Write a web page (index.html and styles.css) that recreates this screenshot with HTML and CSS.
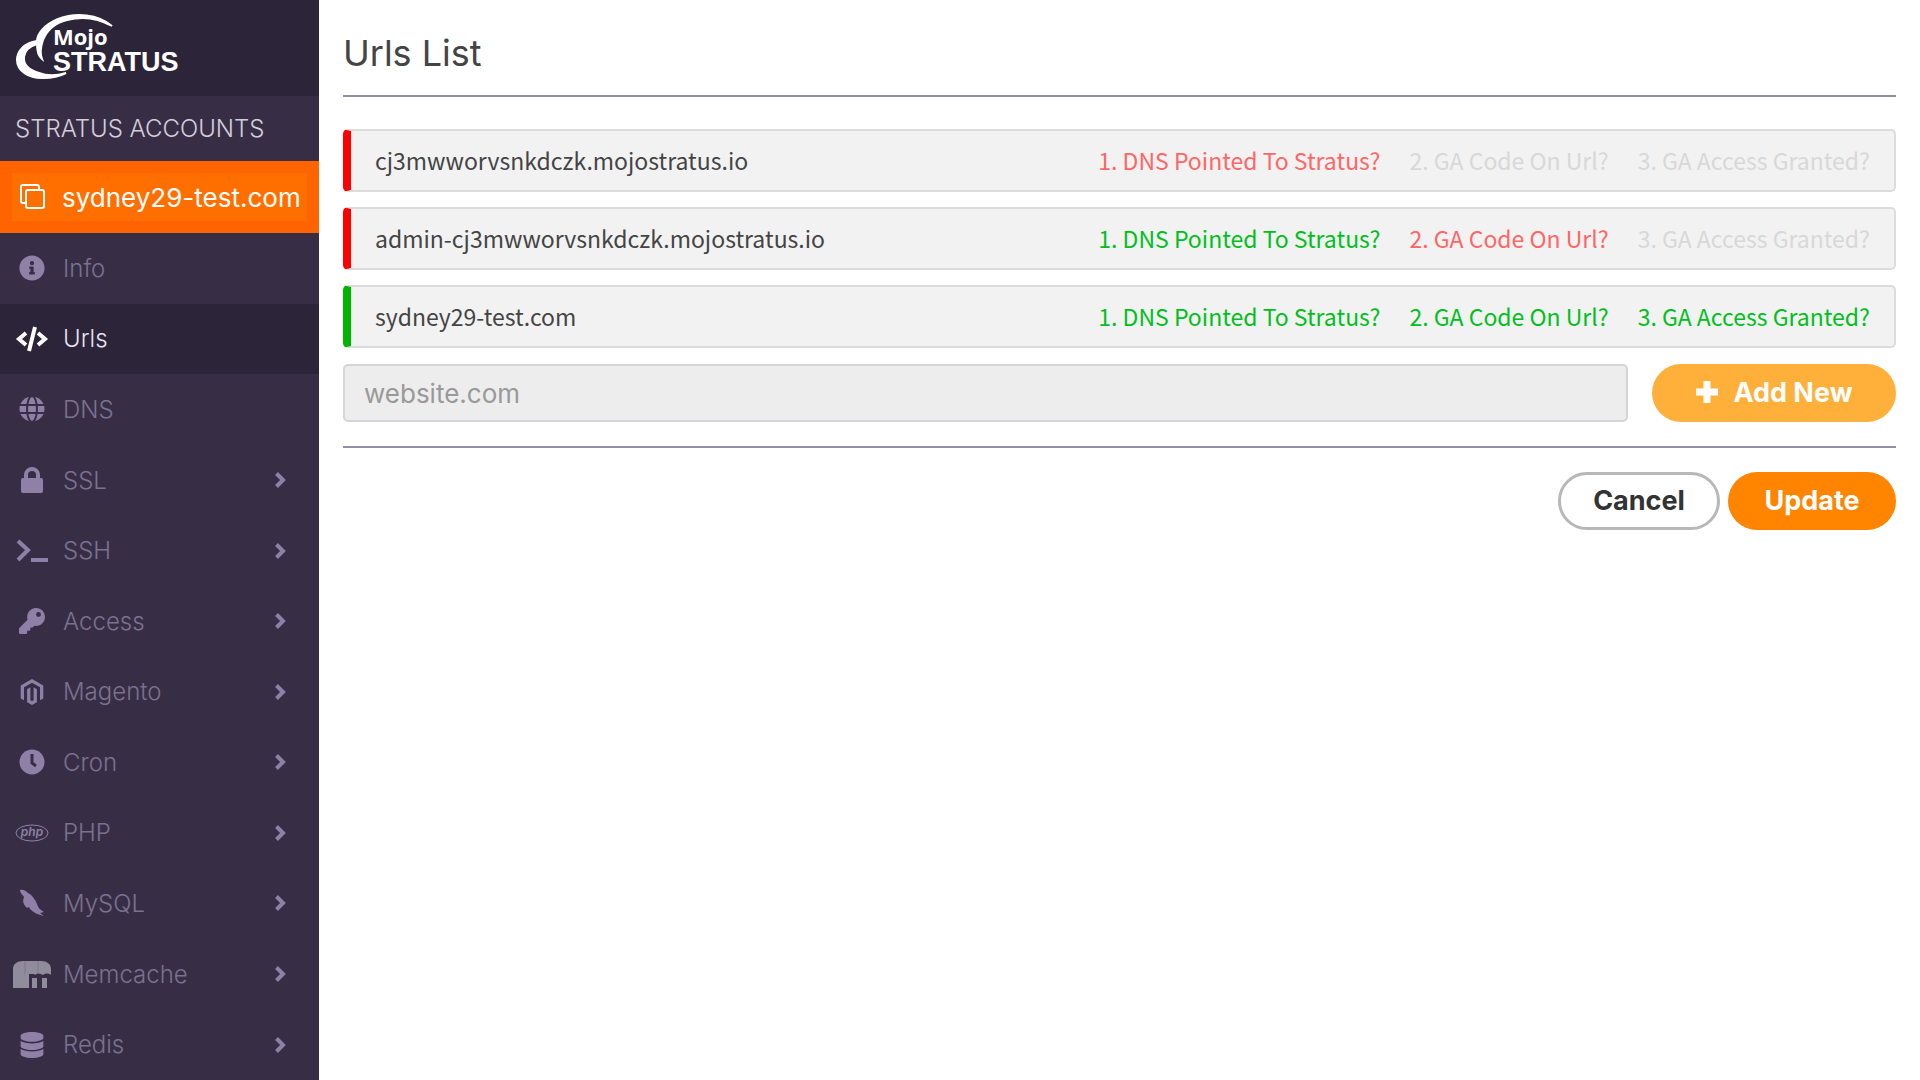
FILE: index.html
```html
<!DOCTYPE html>
<html lang="en">
<head>
    <meta charset="UTF-8">
    <meta name="viewport" content="width=device-width, initial-scale=1.0">
    <title>Urls List</title>

    <link rel="stylesheet" href="styles.css">
</head>
<body>
    <!-- Shared icons -->
    <svg class="sprite" aria-hidden="true">
        <symbol id="chevron" viewBox="0 0 12 18">
            <path d="M2.500 2.500L9 9l-6.500 6.500" fill="none" stroke="currentColor" stroke-width="4"/>
        </symbol>
    </svg>

    <aside class="sidebar">
        <a href="#home" class="logo">
            <svg width="190" height="84" viewBox="0 0 190 84" role="img" aria-label="Mojo Stratus">
                <path d="M112 26C98 14 76 12 58 19C44 25 37 34 37 41C24 43 17 51 17 60C17 71 29 79 44 78C53 78 60 76 66 73C56 76 47 76 39 73C29 70 23 65 24 57C25 50 30 46 37 44C37 51 38 56 42 59C40 54 41 46 43 40C47 30 55 23 67 20C82 16 98 18 112 26Z" fill="currentColor" stroke="currentColor" stroke-width="2"/>
                <text x="53" y="45" class="logo-mojo">Mojo</text>
                <text x="53" y="71" class="logo-stratus">STRATUS</text>
            </svg>
        </a>
        <h2 class="sidebar-title">STRATUS ACCOUNTS</h2>
        <div class="account">
            <a href="#account">
                <svg class="icon" width="26" height="26" viewBox="0 0 26 26">
                    <g fill="none" stroke="currentColor" stroke-width="2">
                        <rect x="6" y="6" width="18" height="18" rx="2"/>
                        <path d="M6 19H3a2 2 0 0 1-2-2V3a2 2 0 0 1 2-2h14a2 2 0 0 1 2 2v3"/>
                    </g>
                </svg>
                <span>sydney29-test.com</span>
            </a>
        </div>
        <nav class="nav">
            <a href="#info">
                <svg class="icon" width="26" height="26" viewBox="0 0 512 512"><path fill="currentColor" d="M256 8C119 8 8 119 8 256s111 248 248 248 248-111 248-248S393 8 256 8zm0 110a42 42 0 1 1 0 84 42 42 0 0 1 0-84zm56 254a12 12 0 0 1-12 12h-88a12 12 0 0 1-12-12v-24a12 12 0 0 1 12-12h12v-64h-12a12 12 0 0 1-12-12v-24a12 12 0 0 1 12-12h64a12 12 0 0 1 12 12v100h12a12 12 0 0 1 12 12z"/></svg>
                <span>Info</span>
            </a>
            <a href="#urls" class="active">
                <svg class="icon" width="32" height="26" viewBox="0 0 32 26"><path fill="none" stroke="currentColor" stroke-width="4" d="M10 7l-7 6 7 6M22 7l7 6-7 6M19 1l-6 24"/></svg>
                <span>Urls</span>
            </a>
            <a href="#dns">
                <svg class="icon globe" width="26" height="26" viewBox="0 0 26 26">
                    <circle cx="13" cy="13" r="12.500" fill="currentColor"/>
                    <g class="cut"><path d="M0 9h26M0 17h26"/><ellipse cx="13" cy="13" rx="5" ry="13"/></g>
                </svg>
                <span>DNS</span>
            </a>
            <a href="#ssl">
                <svg class="icon" width="24" height="26" viewBox="0 0 24 26"><rect x="1" y="11" width="22" height="15" rx="2" fill="currentColor"/><path d="M6 12V8a6 6 0 0 1 12 0v4" fill="none" stroke="currentColor" stroke-width="4"/></svg>
                <span>SSL</span>
                <svg class="chevron" width="12" height="18"><use href="#chevron"/></svg>
            </a>
            <a href="#ssh">
                <svg class="icon" width="32" height="24" viewBox="0 0 32 24"><path d="M2 2l10 9L2 21M15 21h17" fill="none" stroke="currentColor" stroke-width="4"/></svg>
                <span>SSH</span>
                <svg class="chevron" width="12" height="18"><use href="#chevron"/></svg>
            </a>
            <a href="#access">
                <svg class="icon" width="26" height="26" viewBox="0 0 512 512"><path fill="currentColor" d="M512 176c0 97-79 176-176 176-11 0-22-1-33-3l-24 27a24 24 0 0 1-18 8h-37v40a24 24 0 0 1-24 24h-40v40a24 24 0 0 1-24 24H24a24 24 0 0 1-24-24v-78a24 24 0 0 1 7-17l162-162A176 176 0 0 1 336 0c97 0 176 79 176 176zM336 128a48 48 0 1 0 96 0 48 48 0 0 0-96 0z"/></svg>
                <span>Access</span>
                <svg class="chevron" width="12" height="18"><use href="#chevron"/></svg>
            </a>
            <a href="#magento">
                <svg class="icon" width="24" height="26" viewBox="0 0 448 512"><path fill="currentColor" d="M446 128v256l-64 36V164L224 73 66 164v256L2 384V128L224 0zM256 420l-32 18-32-18V164l-64 37v256l96 55 96-55V201l-64-37z"/></svg>
                <span>Magento</span>
                <svg class="chevron" width="12" height="18"><use href="#chevron"/></svg>
            </a>
            <a href="#cron">
                <svg class="icon" width="26" height="26" viewBox="0 0 26 26"><circle cx="13" cy="13" r="12.500" fill="currentColor"/><path d="M13 5v9l4 3" class="cut hands"/></svg>
                <span>Cron</span>
                <svg class="chevron" width="12" height="18"><use href="#chevron"/></svg>
            </a>
            <a href="#php">
                <svg class="icon" width="34" height="18" viewBox="0 0 34 18"><ellipse cx="17" cy="9" rx="16" ry="8" fill="none" stroke="currentColor"/><text x="17" y="12" text-anchor="middle" class="php-text">php</text></svg>
                <span>PHP</span>
                <svg class="chevron" width="12" height="18"><use href="#chevron"/></svg>
            </a>
            <a href="#mysql">
                <svg class="icon" width="26" height="28" viewBox="0 0 26 28"><path fill="currentColor" d="M1 1c3-1 6 1 8 3 4 2 7 6 9 11 1 3 2 5 4 6l3 2-4 1 4 3c-5-1-10-3-14-7l-1-2-2 1c-3-3-5-6-3-11C4 6 1 4 1 1z"/></svg>
                <span>MySQL</span>
                <svg class="chevron" width="12" height="18"><use href="#chevron"/></svg>
            </a>
            <a href="#memcache">
                <svg class="icon memcache" width="38" height="27" viewBox="0 0 38 27"><path fill="currentColor" d="M0 27V8C0 3 4 0 10 0h18c6 0 10 3 10 8v6c-2-2-6-2-8 0-3-2-6-2-8 0l-1-1h-5v14z"/><path fill="currentColor" d="M19 27V17h5v10zM29 27V17h5v10z"/><path d="M12 0v13M25 0v12" stroke="#7d7888" fill="none"/></svg>
                <span>Memcache</span>
                <svg class="chevron" width="12" height="18"><use href="#chevron"/></svg>
            </a>
            <a href="#redis">
                <svg class="icon" width="24" height="26" viewBox="0 0 448 512"><path fill="currentColor" d="M448 73v46c0 40-100 73-224 73S0 159 0 119V73C0 33 100 0 224 0s224 33 224 73zM448 176v103c0 40-100 73-224 73S0 319 0 279V176c48 33 136 48 224 48s176-15 224-48zM448 336v103c0 40-100 73-224 73S0 479 0 439V336c48 33 136 48 224 48s176-15 224-48z"/></svg>
                <span>Redis</span>
                <svg class="chevron" width="12" height="18"><use href="#chevron"/></svg>
            </a>
        </nav>
    </aside>

    <main>
        <h1>Urls List</h1>

        <form>
            <ul class="url-list">
                <li class="url bad">
                    <span class="url-name">cj3mwworvsnkdczk.mojostratus.io</span>
                    <span class="status fail">1. DNS Pointed To Stratus?</span>
                    <span class="status">2. GA Code On Url?</span>
                    <span class="status">3. GA Access Granted?</span>
                </li>
                <li class="url bad">
                    <span class="url-name">admin-cj3mwworvsnkdczk.mojostratus.io</span>
                    <span class="status ok">1. DNS Pointed To Stratus?</span>
                    <span class="status fail">2. GA Code On Url?</span>
                    <span class="status">3. GA Access Granted?</span>
                </li>
                <li class="url good">
                    <span class="url-name">sydney29-test.com</span>
                    <span class="status ok">1. DNS Pointed To Stratus?</span>
                    <span class="status ok">2. GA Code On Url?</span>
                    <span class="status ok">3. GA Access Granted?</span>
                </li>
            </ul>

            <div class="add-row">
                <input type="text" name="url" placeholder="website.com" aria-label="New url">
                <button type="button" class="btn add-btn">
                    <svg width="24" height="24" viewBox="0 0 24 24"><path d="M12 1v22M1 12h22" stroke="currentColor" stroke-width="7"/></svg>
                    Add New
                </button>
            </div>

            <div class="form-buttons">
                <button type="reset" class="btn cancel-btn">Cancel</button>
                <button type="submit" class="btn update-btn">Update</button>
            </div>
        </form>
    </main>
</body>
</html>
```
FILE: styles.css
```css
* {
    box-sizing: border-box;
}

body {
    display: flex;
    min-height: 100vh;
    margin: 0;
    font-family: Inter, "Open Sans", sans-serif;
    font-size: 24px;
    background-color: #fff;
    color: #444;
}

a {
    color: inherit;
    text-decoration: none;
}

.sprite {
    display: none;
}

/* Sidebar */
.sidebar {
    display: flex;
    flex-direction: column;
    flex: 0 0 319px;
    background-color: #372e46;
}

.logo {
    height: 96px;
    background-color: #2c2439;
    color: #fff;
}

.logo-mojo {
    font-family: "Open Sans", sans-serif;
    font-size: 22px;
    font-weight: bold;
    fill: currentColor;
}

.logo-stratus {
    font-family: "Liberation Sans", sans-serif;
    font-size: 27px;
    font-weight: bold;
    fill: currentColor;
}

.sidebar-title {
    margin: 0;
    padding: 0 15px;
    font-size: 24px;
    font-weight: 300;
    line-height: 65px;
    color: #d2cedb;
}

.account {
    padding: 12px;
    background-color: #ff6400;
    color: #fff;
}

.account a {
    display: flex;
    align-items: center;
    height: 48px;
    background-color: #ff6f00;
    font-size: 26px;
}

.account .icon {
    margin: 0 16px 0 8px;
}

.nav {
    display: flex;
    flex-direction: column;
    flex: 1;
}

.nav a {
    display: flex;
    align-items: center;
    flex: 1;
    min-height: 64px;
    padding: 0 33px 0 12px;
    font-weight: 300;
    color: #7b7190;
}

.nav a.active {
    background-color: #2c2439;
    color: #e6e3ec;
}

.nav .icon {
    flex: 0 0 40px;
    color: #8e80a7;
}

.nav .active .icon {
    color: #fff;
}

.nav .memcache {
    color: #918c9b;
}

.nav span {
    flex: 1;
    margin-left: 11px;
}

.chevron {
    color: #8e80a7;
}

.cut {
    fill: none;
    stroke: #372e46;
    stroke-width: 2;
}

.hands {
    stroke-width: 3;
}

.php-text {
    font-size: 12px;
    font-style: italic;
    font-weight: 600;
    fill: currentColor;
}

/* Content */
main {
    flex: 1;
    padding: 0 24px;
}

h1 {
    height: 97px;
    margin: 0 0 32px;
    border-bottom: 2px solid #918fa8;
    font-size: 36px;
    font-weight: 400;
    line-height: 106px;
}

.url-list {
    display: flex;
    flex-direction: column;
    gap: 15px;
    margin: 0 0 16px;
    padding: 0;
    list-style: none;
}

.url {
    display: flex;
    align-items: center;
    gap: 29px;
    height: 63px;
    padding: 0 24px 2px;
    border: 2px solid #dcdcdc;
    border-left: 8px solid #f00;
    border-radius: 5px;
    background-color: #f2f2f2;
    font-family: "Noto Sans CJK JP", sans-serif;
    font-size: 23px;
}

.url.good {
    border-left-color: #00b400;
}

.url-name {
    flex: 1;
}

.status {
    color: #d8d8d8;
}

.status.fail {
    color: #ff6666;
}

.status.ok {
    color: #00c020;
}

.add-row {
    display: flex;
    gap: 24px;
    padding-bottom: 24px;
    border-bottom: 2px solid #918fa8;
}

.add-row input {
    flex: 1;
    height: 58px;
    padding: 0 19px;
    border: 2px solid #d3d5d8;
    border-radius: 5px;
    background-color: #ededed;
    font: inherit;
    font-size: 26px;
}

.add-row input::placeholder {
    color: #999;
}

.btn {
    height: 58px;
    padding: 0 0 2px;
    border: none;
    border-radius: 29px;
    font: inherit;
    font-size: 27px;
    font-weight: 700;
    color: #fff;
    cursor: pointer;
}

.add-btn {
    display: flex;
    align-items: center;
    justify-content: center;
    gap: 14px;
    width: 244px;
    background-color: #ffb03b;
}

.form-buttons {
    display: flex;
    justify-content: flex-end;
    gap: 8px;
    margin-top: 24px;
}

.cancel-btn {
    width: 162px;
    border: 3px solid #b8b8b8;
    background-color: #fff;
    color: #333;
}

.update-btn {
    width: 168px;
    background-color: #ff8400;
}

.btn:hover {
    opacity: 0.9;
}
```
